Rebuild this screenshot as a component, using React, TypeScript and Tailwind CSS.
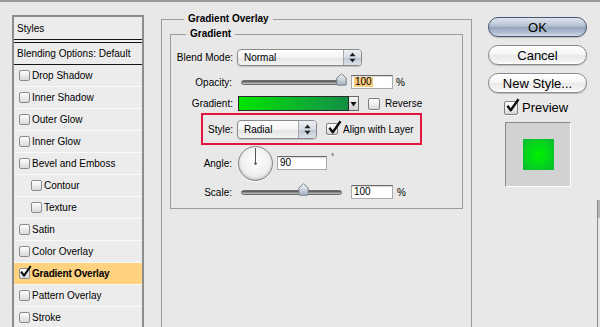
import React from "react";

function CheckMark({ size = 14, className = "" }: { size?: number; className?: string }) {
  return (
    <svg
      width={size}
      height={size}
      viewBox="0 0 14 14"
      className={"absolute pointer-events-none " + className}
    >
      <path
        d="M2.2 7.2 L5.4 11.4 L12.6 1.2"
        stroke="#0d0d0d"
        strokeWidth="2.2"
        fill="none"
        strokeLinejoin="round"
      />
    </svg>
  );
}

function ListBox({ checked }: { checked?: boolean }) {
  return (
    <span className="relative inline-block w-[11px] h-[11px] shrink-0 rounded-[2px] border border-[#8c8c8c] bg-linear-to-b from-white to-[#d9d9d9]">
      {checked && <CheckMark size={13} className="-top-[4px] left-[-1px]" />}
    </span>
  );
}

function Box({ checked, className = "" }: { checked?: boolean; className?: string }) {
  return (
    <span
      className={
        "relative inline-block shrink-0 rounded-[2px] border border-[#7f7f7f] bg-linear-to-b from-white via-[#f1f1f1] to-[#d6d6d6] shadow-[0_1px_0_rgba(255,255,255,0.8)] " +
        className
      }
    >
      {checked && <CheckMark size={15} className="-top-[4px] left-[0px]" />}
    </span>
  );
}

function Arrows() {
  return (
    <svg width="7" height="11" viewBox="0 0 7 11">
      <path d="M3.5 0.5 L6.5 4.2 L0.5 4.2 Z" fill="#1e1e1e" />
      <path d="M3.5 10.5 L6.5 6.8 L0.5 6.8 Z" fill="#1e1e1e" />
    </svg>
  );
}

function Select({ className = "", children }: { className?: string; children: React.ReactNode }) {
  return (
    <div
      className={
        "flex items-stretch rounded-[4px] border border-[#8a8a8a] bg-[linear-gradient(to_bottom,#ffffff_0%,#f4f4f4_50%,#e4e4e4_51%,#f3f3f3_100%)] shadow-[0_1px_1px_rgba(0,0,0,0.18)] " +
        className
      }
    >
      <div className="flex-1 flex items-center pl-[6px] text-[10px]">{children}</div>
      <div className="w-[18px] flex items-center justify-center border-l border-[#a6a6a6] rounded-r-[3px] bg-[linear-gradient(to_bottom,#eef1f5_0%,#d6dce5_50%,#bcc6d3_51%,#dbe2ea_100%)]">
        <Arrows />
      </div>
    </div>
  );
}

function Slider({ className = "", thumb }: { className?: string; thumb: number }) {
  return (
    <div className={"relative h-[14px] flex items-center " + className}>
      <div className="w-full h-[5px] rounded-full border border-[#6c6c6c] bg-[linear-gradient(to_bottom,#4a4a4a,#9a9a9a_60%,#c8c8c8)]" />
      <svg
        width="11"
        height="13"
        viewBox="0 0 11 13"
        className="absolute top-[-2px]"
        style={{ left: thumb }}
      >
        <defs>
          <linearGradient id="thg" x1="0" y1="0" x2="0" y2="1">
            <stop offset="0" stopColor="#f4f6f9" />
            <stop offset="0.55" stopColor="#c9d0da" />
            <stop offset="1" stopColor="#a6b0bf" />
          </linearGradient>
        </defs>
        <path
          d="M5.5 0.8 L10.2 5 L10.2 11.2 Q10.2 12.2 9.2 12.2 L1.8 12.2 Q0.8 12.2 0.8 11.2 L0.8 5 Z"
          fill="url(#thg)"
          stroke="#6e7784"
          strokeWidth="0.9"
        />
      </svg>
    </div>
  );
}

function Input({ className = "", children }: { className?: string; children: React.ReactNode }) {
  return (
    <div
      className={
        "h-[14px] bg-white border border-[#a9a9a9] border-t-[#6a6a6a] flex items-center pl-[2px] text-[10px] leading-none shadow-[inset_0_1px_1px_rgba(0,0,0,0.15)] " +
        className
      }
    >
      {children}
    </div>
  );
}

function Button({ primary, className = "", children }: { primary?: boolean; className?: string; children: React.ReactNode }) {
  return (
    <div
      className={
        (primary
          ? "border-[#48576f] bg-[linear-gradient(to_bottom,#dfe5ee_0%,#b5c1d2_45%,#95a6be_52%,#aebdd1_80%,#d3dde9_100%)] "
          : "border-[#8b8b8b] bg-[linear-gradient(to_bottom,#ffffff_0%,#f7f7f7_45%,#e9e9e9_52%,#f2f2f2_85%,#ffffff_100%)] ") +
        "h-[20px] rounded-full border flex items-center justify-center text-[13px] leading-none text-black shadow-[0_1px_1px_rgba(0,0,0,0.2)] " +
        className
      }
    >
      {children}
    </div>
  );
}

const items: { label: string; indent?: boolean; selected?: boolean }[] = [
  { label: "Drop Shadow" },
  { label: "Inner Shadow" },
  { label: "Outer Glow" },
  { label: "Inner Glow" },
  { label: "Bevel and Emboss" },
  { label: "Contour", indent: true },
  { label: "Texture", indent: true },
  { label: "Satin" },
  { label: "Color Overlay" },
  { label: "Gradient Overlay", selected: true },
  { label: "Pattern Overlay" },
  { label: "Stroke" },
];

export default function App() {
  return (
    <div className="relative w-[600px] h-[327px] overflow-hidden bg-[#e8e8e8] text-black text-[10px] font-['Liberation_Sans',Arial,sans-serif] flex flex-col">
      <div className="h-[2px] shrink-0 bg-[#9a9a9a]" />
      <div className="flex items-start pl-[12px]">
        {/* Styles list */}
        <div className="mt-[13px] w-[132px] h-[340px] shrink-0 border-2 border-[#8d8d8d] bg-[#ececec] flex flex-col">
          <div className="h-[22px] flex items-center pl-[3px] text-[10px]">Styles</div>
          <div className="h-[4px] border-t border-b border-[#151515] bg-[#f0f0f0]" />
          <div className="h-[22px] flex items-center pl-[3px] border-b border-[#151515]">
            Blending Options: Default
          </div>
          {items.map((it) => (
            <div
              key={it.label}
              className={
                "h-[22px] flex items-center gap-[2px] border-b border-[#f9f9f9] " +
                (it.indent ? "pl-[17px] " : "pl-[5px] ") +
                (it.selected ? "bg-[#fed27f] font-bold" : "")
              }
            >
              <ListBox checked={it.selected} />
              <span className={it.selected ? "tracking-[-0.2px]" : ""}>{it.label}</span>
            </div>
          ))}
        </div>

        {/* Main panel */}
        <fieldset className="mt-[11px] ml-[17px] w-[311px] h-[340px] shrink-0 border border-[#9c9c9c] px-[8px] pt-[3px]">
          <legend className="ml-[14px] px-[4px] font-bold text-[10px] leading-[12px]">Gradient Overlay</legend>
          <fieldset className="border border-[#9c9c9c] pb-[9px]">
            <legend className="ml-[15px] px-[4px] font-bold text-[10px] leading-[12px]">Gradient</legend>

            <div className="mt-[9px] flex items-center h-[17px]">
              <div className="w-[62px] text-right">Blend Mode:</div>
              <Select className="ml-[4px] w-[125px] h-[17px]">Normal</Select>
            </div>

            <div className="mt-[9px] flex items-center h-[14px]">
              <div className="w-[61px] text-right">Opacity:</div>
              <Slider className="ml-[9px] w-[104px]" thumb={95} />
              <Input className="ml-[6px] w-[42px]">
                <span className="bg-[#f9cb7f] px-[1px]">100</span>
              </Input>
              <span className="ml-[3px]">%</span>
            </div>

            <div className="mt-[7px] flex items-center h-[15px]">
              <div className="w-[62px] text-right">Gradient:</div>
              <div className="ml-[5px] w-[111px] h-[15px] border border-[#2b2b2b] bg-[linear-gradient(to_right,#00e600,#0fa33a_75%,#138e42)]" />
              <div className="w-[10px] h-[15px] border border-l-0 border-[#6a6a6a] bg-linear-to-b from-[#f4f4f4] to-[#cfcfcf] flex items-center justify-center">
                <svg width="7" height="6" viewBox="0 0 7 6">
                  <path d="M0.5 1 L6.5 1 L3.5 5.5 Z" fill="#111" />
                </svg>
              </div>
              <Box className="ml-[9px] w-[12px] h-[12px]" />
              <span className="ml-[5px]">Reverse</span>
            </div>

            <div className="mt-[2px] ml-[30px] w-[221px] h-[32px] border-2 border-[#e3163f] flex items-center">
              <div className="w-[30px] text-right">Style:</div>
              <Select className="ml-[4px] w-[80px] h-[19px]">Radial</Select>
              <Box checked className="ml-[9px] w-[12px] h-[12px]" />
              <span className="ml-[5px]">Align with Layer</span>
            </div>

            <div className="flex items-center h-[36px]">
              <div className="w-[61px] text-right">Angle:</div>
              <div className="ml-[6px] w-[35px] h-[35px] rounded-full border border-[#858585] bg-[radial-gradient(circle_at_50%_40%,#ffffff_0%,#f0f0f0_55%,#cdcdcd_100%)] shadow-[inset_0_-1px_2px_rgba(0,0,0,0.18),0_1px_0_rgba(255,255,255,0.9)] flex items-center justify-center">
                <svg width="33" height="33" viewBox="0 0 33 33">
                  <line x1="16.5" y1="16.5" x2="16.5" y2="1" stroke="#555" strokeWidth="1" />
                  <circle cx="16.5" cy="16.5" r="1.3" fill="#555" />
                </svg>
              </div>
              <Input className="ml-[4px] w-[50px]">90</Input>
              <span className="self-start mt-[8px] ml-[4px] text-[8px] leading-none">°</span>
            </div>

            <div className="mt-[4px] flex items-center h-[14px]">
              <div className="w-[61px] text-right">Scale:</div>
              <Slider className="ml-[9px] w-[101px]" thumb={57} />
              <Input className="ml-[9px] w-[42px]">100</Input>
              <span className="ml-[4px]">%</span>
            </div>
          </fieldset>
        </fieldset>

        {/* Right column */}
        <div className="mt-[15px] ml-[16px] w-[99px] shrink-0 flex flex-col">
          <Button primary>OK</Button>
          <Button className="mt-[8px]">Cancel</Button>
          <Button className="mt-[8px]">New Style...</Button>
          <div className="mt-[7px] h-[15px] flex items-center pl-[16px]">
            <Box checked className="w-[14px] h-[14px]" />
            <span className="ml-[4px] text-[13px] leading-none">Preview</span>
          </div>
          <div className="mt-[7px] ml-[17px] w-[66px] h-[65px] bg-[#d2d2d2] border border-[#8a8a8a] border-b-white border-r-white flex items-center justify-center">
            <div className="w-[31px] h-[31px] bg-[radial-gradient(circle,#00f200_0%,#03d51c_55%,#0cb634_100%)]" />
          </div>
        </div>
      </div>

      {/* sliver of a window behind */}
      <div className="absolute left-[597px] top-[200px] bottom-0 w-[1px] bg-[#8a8a8a]" />
      <div className="absolute left-[598px] top-[200px] w-[2px] h-[18px] bg-[#b5b5b5]" />
    </div>
  );
}
